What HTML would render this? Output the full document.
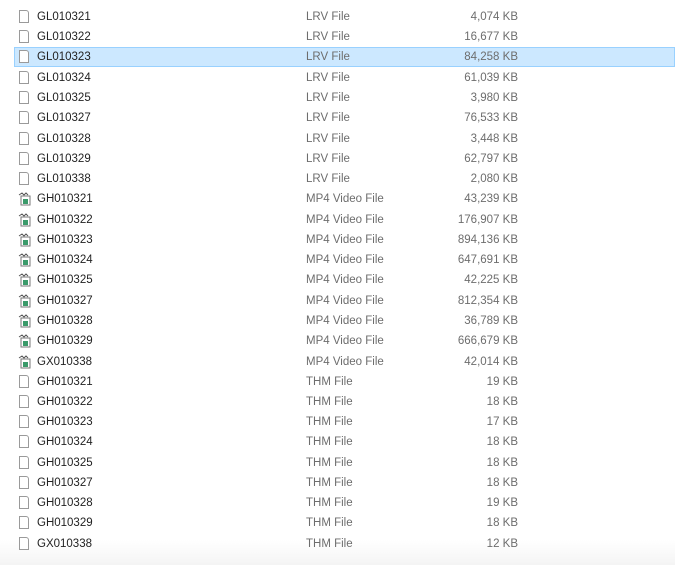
<!DOCTYPE html>
<html><head><meta charset="utf-8"><style>
html,body{margin:0;padding:0;width:675px;height:565px;overflow:hidden;background:#fff;font-family:"Liberation Sans",sans-serif;font-size:11.5px}
body{background:linear-gradient(#fff 0,#fff 540px,#f4f4f4 565px)}
.w{position:absolute;left:0;top:1px;width:675px;height:564px}
.r{position:absolute;left:14px;width:661px;height:20px;line-height:21px}
.sel{background:#cce8ff;border:1px solid #99d1ff;box-sizing:border-box;line-height:19px}
.sel .n{left:22px}.sel .t{left:291px}.sel .s{right:156px}
.n{position:absolute;left:23px;color:#222}
.t{position:absolute;left:292px;color:#6d6d6d}
.s{position:absolute;right:157px;color:#6d6d6d;text-align:right}
.i{position:absolute;left:5px;top:3px;width:10px;height:13px;border:1px solid #9a9a9a;box-sizing:border-box;background:#fff;border-top-right-radius:3px}
.sel .i{left:4px;top:2px}
.v{position:absolute;left:4px;top:3px;width:13px;height:14px}
</style></head><body><div class="w">
<div class="r" style="top:6px"><span class="i"></span><span class="n">GL010321</span><span class="t">LRV File</span><span class="s">4,074 KB</span></div>
<div class="r" style="top:26px"><span class="i"></span><span class="n">GL010322</span><span class="t">LRV File</span><span class="s">16,677 KB</span></div>
<div class="r sel" style="top:46px"><span class="i"></span><span class="n">GL010323</span><span class="t">LRV File</span><span class="s">84,258 KB</span></div>
<div class="r" style="top:67px"><span class="i"></span><span class="n">GL010324</span><span class="t">LRV File</span><span class="s">61,039 KB</span></div>
<div class="r" style="top:87px"><span class="i"></span><span class="n">GL010325</span><span class="t">LRV File</span><span class="s">3,980 KB</span></div>
<div class="r" style="top:107px"><span class="i"></span><span class="n">GL010327</span><span class="t">LRV File</span><span class="s">76,533 KB</span></div>
<div class="r" style="top:128px"><span class="i"></span><span class="n">GL010328</span><span class="t">LRV File</span><span class="s">3,448 KB</span></div>
<div class="r" style="top:148px"><span class="i"></span><span class="n">GL010329</span><span class="t">LRV File</span><span class="s">62,797 KB</span></div>
<div class="r" style="top:168px"><span class="i"></span><span class="n">GL010338</span><span class="t">LRV File</span><span class="s">2,080 KB</span></div>
<div class="r" style="top:188px"><svg class="v" viewBox="0 0 13 14"><rect x="3" y="4" width="9" height="9" fill="#fff" stroke="#777"/><rect x="5" y="7" width="5" height="5" fill="#3a9a6a"/><path d="M1 3l3-2 2 2 2-2 2 2" stroke="#555" fill="none"/></svg><span class="n">GH010321</span><span class="t">MP4 Video File</span><span class="s">43,239 KB</span></div>
<div class="r" style="top:209px"><svg class="v" viewBox="0 0 13 14"><rect x="3" y="4" width="9" height="9" fill="#fff" stroke="#777"/><rect x="5" y="7" width="5" height="5" fill="#3a9a6a"/><path d="M1 3l3-2 2 2 2-2 2 2" stroke="#555" fill="none"/></svg><span class="n">GH010322</span><span class="t">MP4 Video File</span><span class="s">176,907 KB</span></div>
<div class="r" style="top:229px"><svg class="v" viewBox="0 0 13 14"><rect x="3" y="4" width="9" height="9" fill="#fff" stroke="#777"/><rect x="5" y="7" width="5" height="5" fill="#3a9a6a"/><path d="M1 3l3-2 2 2 2-2 2 2" stroke="#555" fill="none"/></svg><span class="n">GH010323</span><span class="t">MP4 Video File</span><span class="s">894,136 KB</span></div>
<div class="r" style="top:249px"><svg class="v" viewBox="0 0 13 14"><rect x="3" y="4" width="9" height="9" fill="#fff" stroke="#777"/><rect x="5" y="7" width="5" height="5" fill="#3a9a6a"/><path d="M1 3l3-2 2 2 2-2 2 2" stroke="#555" fill="none"/></svg><span class="n">GH010324</span><span class="t">MP4 Video File</span><span class="s">647,691 KB</span></div>
<div class="r" style="top:269px"><svg class="v" viewBox="0 0 13 14"><rect x="3" y="4" width="9" height="9" fill="#fff" stroke="#777"/><rect x="5" y="7" width="5" height="5" fill="#3a9a6a"/><path d="M1 3l3-2 2 2 2-2 2 2" stroke="#555" fill="none"/></svg><span class="n">GH010325</span><span class="t">MP4 Video File</span><span class="s">42,225 KB</span></div>
<div class="r" style="top:290px"><svg class="v" viewBox="0 0 13 14"><rect x="3" y="4" width="9" height="9" fill="#fff" stroke="#777"/><rect x="5" y="7" width="5" height="5" fill="#3a9a6a"/><path d="M1 3l3-2 2 2 2-2 2 2" stroke="#555" fill="none"/></svg><span class="n">GH010327</span><span class="t">MP4 Video File</span><span class="s">812,354 KB</span></div>
<div class="r" style="top:310px"><svg class="v" viewBox="0 0 13 14"><rect x="3" y="4" width="9" height="9" fill="#fff" stroke="#777"/><rect x="5" y="7" width="5" height="5" fill="#3a9a6a"/><path d="M1 3l3-2 2 2 2-2 2 2" stroke="#555" fill="none"/></svg><span class="n">GH010328</span><span class="t">MP4 Video File</span><span class="s">36,789 KB</span></div>
<div class="r" style="top:330px"><svg class="v" viewBox="0 0 13 14"><rect x="3" y="4" width="9" height="9" fill="#fff" stroke="#777"/><rect x="5" y="7" width="5" height="5" fill="#3a9a6a"/><path d="M1 3l3-2 2 2 2-2 2 2" stroke="#555" fill="none"/></svg><span class="n">GH010329</span><span class="t">MP4 Video File</span><span class="s">666,679 KB</span></div>
<div class="r" style="top:351px"><svg class="v" viewBox="0 0 13 14"><rect x="3" y="4" width="9" height="9" fill="#fff" stroke="#777"/><rect x="5" y="7" width="5" height="5" fill="#3a9a6a"/><path d="M1 3l3-2 2 2 2-2 2 2" stroke="#555" fill="none"/></svg><span class="n">GX010338</span><span class="t">MP4 Video File</span><span class="s">42,014 KB</span></div>
<div class="r" style="top:371px"><span class="i"></span><span class="n">GH010321</span><span class="t">THM File</span><span class="s">19 KB</span></div>
<div class="r" style="top:391px"><span class="i"></span><span class="n">GH010322</span><span class="t">THM File</span><span class="s">18 KB</span></div>
<div class="r" style="top:411px"><span class="i"></span><span class="n">GH010323</span><span class="t">THM File</span><span class="s">17 KB</span></div>
<div class="r" style="top:431px"><span class="i"></span><span class="n">GH010324</span><span class="t">THM File</span><span class="s">18 KB</span></div>
<div class="r" style="top:452px"><span class="i"></span><span class="n">GH010325</span><span class="t">THM File</span><span class="s">18 KB</span></div>
<div class="r" style="top:472px"><span class="i"></span><span class="n">GH010327</span><span class="t">THM File</span><span class="s">18 KB</span></div>
<div class="r" style="top:492px"><span class="i"></span><span class="n">GH010328</span><span class="t">THM File</span><span class="s">19 KB</span></div>
<div class="r" style="top:512px"><span class="i"></span><span class="n">GH010329</span><span class="t">THM File</span><span class="s">18 KB</span></div>
<div class="r" style="top:533px"><span class="i"></span><span class="n">GX010338</span><span class="t">THM File</span><span class="s">12 KB</span></div>
</div></body></html>
